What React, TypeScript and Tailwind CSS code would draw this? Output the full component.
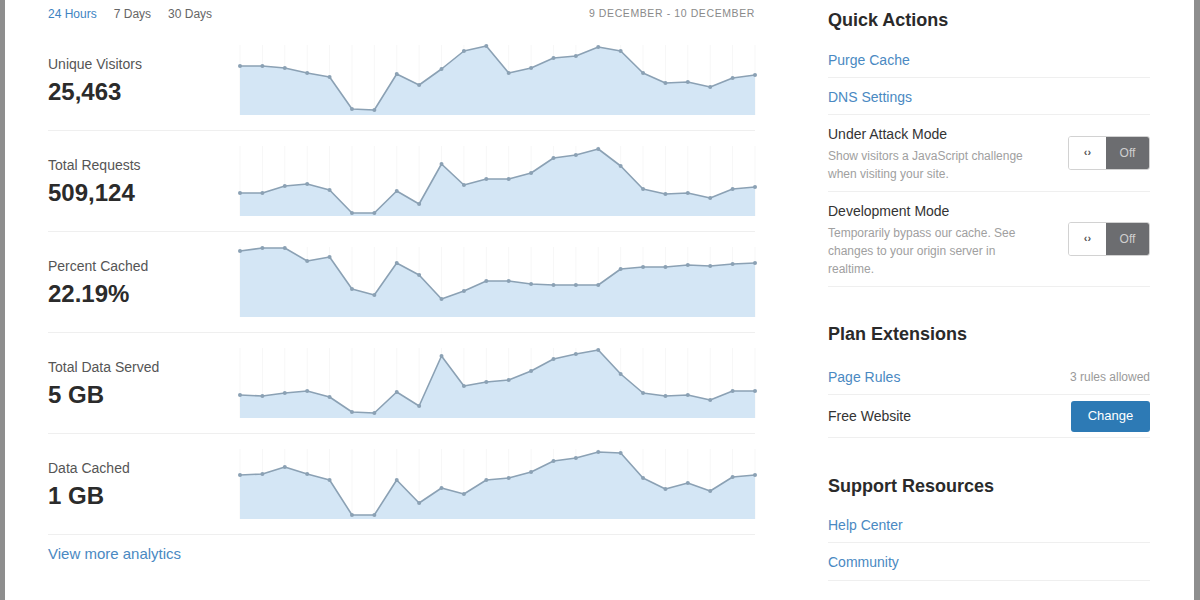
type Metric = {
  label: string;
  value: string;
  points: number[];
};

const metrics: Metric[] = [
  {
    label: "Unique Visitors",
    value: "25,463",
    points: [21, 21, 23, 28, 32, 64, 65, 29, 40, 24, 6, 1, 28, 23, 13, 11, 2, 6, 28, 38, 37, 42, 33, 30],
  },
  {
    label: "Total Requests",
    value: "509,124",
    points: [47, 47, 40, 38, 44, 67, 67, 45, 58, 18, 39, 33, 33, 27, 12, 9, 3, 20, 43, 48, 47, 52, 43, 41],
  },
  {
    label: "Percent Cached",
    value: "22.19%",
    points: [4, 1, 1, 14, 10, 42, 48, 16, 28, 52, 44, 34, 34, 37, 38, 38, 38, 22, 20, 20, 18, 19, 17, 16],
  },
  {
    label: "Total Data Served",
    value: "5 GB",
    points: [47, 48, 45, 43, 49, 64, 65, 44, 58, 8, 38, 34, 32, 23, 11, 6, 2, 26, 45, 48, 47, 52, 43, 43],
  },
  {
    label: "Data Cached",
    value: "1 GB",
    points: [26, 25, 18, 25, 31, 66, 66, 31, 54, 39, 45, 31, 29, 23, 12, 9, 3, 4, 29, 40, 34, 42, 28, 26],
  },
];

const W = 515;
const H = 70;

function Sparkline({ points }: { points: number[] }) {
  const step = W / (points.length - 1);
  const xs = points.map((_, i) => i * step);
  const line = points.map((y, i) => `${i === 0 ? "M" : "L"}${xs[i].toFixed(1)},${y}`).join(" ");
  const area = `${line} L${W},${H} L0,${H} Z`;

  return (
    <svg width={W} height={H} viewBox={`0 0 ${W} ${H}`} className="shrink-0 overflow-visible">
      {xs.map((x, i) => (
        <line key={i} x1={x} y1={0} x2={x} y2={H} stroke="#f7f7f7" strokeWidth={1} />
      ))}
      <path d={area} fill="#d4e6f5" />
      <path d={line} fill="none" stroke="#8ba1b4" strokeWidth={1.6} strokeLinejoin="round" />
      {points.map((y, i) => (
        <circle key={i} cx={xs[i]} cy={y} r={2} fill="#8ba1b4" />
      ))}
    </svg>
  );
}

function Toggle() {
  return (
    <div className="flex h-[34px] w-[82px] shrink-0 overflow-hidden rounded-[3px] border border-[#d2d2d2]">
      <div className="flex flex-1 items-center justify-center bg-white text-[11px] font-bold text-[#555]">
        ‹›
      </div>
      <div className="flex w-[43px] items-center justify-center bg-[#6c6d70] text-[12px] text-[#cfcfcf]">
        Off
      </div>
    </div>
  );
}

function LinkRow({ text, right, h = "h-[37px]" }: { text: string; right?: string; h?: string }) {
  return (
    <div className={`flex ${h} items-center justify-between border-b border-[#efefef] pt-[2px]`}>
      <span className="text-[14px] text-[#4a89c2]">{text}</span>
      {right && <span className="text-[12px] text-[#9a9a9a]">{right}</span>}
    </div>
  );
}

function ToggleRow({ title, desc }: { title: string; desc: string }) {
  return (
    <div className="flex items-center justify-between border-b border-[#efefef] pb-[8px] pt-[10px]">
      <div>
        <p className="text-[14px] leading-[18px] text-[#333]">{title}</p>
        <p className="mt-[4px] max-w-[215px] text-[12px] leading-[18px] text-[#a0a0a0]">{desc}</p>
      </div>
      <div className="-mt-[3px]">
        <Toggle />
      </div>
    </div>
  );
}

export default function App() {
  return (
    <div className="flex h-[600px] w-[1200px] border-l-[5px] border-r-[6px] border-[#8e8e8e] bg-white font-['Liberation_Sans',Arial,sans-serif]">
      <div className="w-[750px] shrink-0 pl-[43px]">
        <div className="flex h-[30px] items-center justify-between pb-[2px]">
          <div className="flex gap-[17px] text-[12px]">
            <span className="text-[#3d83c2]">24 Hours</span>
            <span className="text-[#666]">7 Days</span>
            <span className="text-[#666]">30 Days</span>
          </div>
          <span className="text-[10.5px] uppercase tracking-[0.6px] text-[#8a8a8a]">
            9 December - 10 December
          </span>
        </div>

        {metrics.map((m) => (
          <div key={m.label} className="flex h-[101px] items-center border-b border-[#efefef]">
            <div className="w-[192px] shrink-0">
              <p className="text-[14px] leading-[20px] text-[#555]">{m.label}</p>
              <p className="mt-[3px] text-[24px] font-semibold leading-[30px] text-[#2b2b2b]">{m.value}</p>
            </div>
            <Sparkline points={m.points} />
          </div>
        ))}

        <p className="mt-[9px] text-[15px] leading-[20px] text-[#4a89c2]">View more analytics</p>
      </div>

      <div className="ml-[73px] w-[322px] shrink-0">
        <h2 className="mb-[9px] mt-[8px] text-[18px] font-semibold leading-[24px] text-[#2a2a2a]">
          Quick Actions
        </h2>
        <LinkRow text="Purge Cache" />
        <LinkRow text="DNS Settings" />
        <ToggleRow title="Under Attack Mode" desc="Show visitors a JavaScript challenge when visiting your site." />
        <ToggleRow
          title="Development Mode"
          desc="Temporarily bypass our cache. See changes to your origin server in realtime."
        />

        <h2 className="mb-[12px] mt-[35px] text-[18px] font-semibold leading-[24px] text-[#2a2a2a]">
          Plan Extensions
        </h2>
        <LinkRow text="Page Rules" right="3 rules allowed" h="h-[37px]" />
        <div className="flex h-[43px] items-center justify-between border-b border-[#efefef]">
          <span className="text-[14px] text-[#333]">Free Website</span>
          <button className="h-[31px] w-[79px] rounded-[3px] bg-[#2d7ab5] text-[13px] text-white">Change</button>
        </div>

        <h2 className="mb-[8px] mt-[36px] text-[18px] font-semibold leading-[24px] text-[#2a2a2a]">
          Support Resources
        </h2>
        <LinkRow text="Help Center" />
        <LinkRow text="Community" h="h-[38px]" />
      </div>
    </div>
  );
}
